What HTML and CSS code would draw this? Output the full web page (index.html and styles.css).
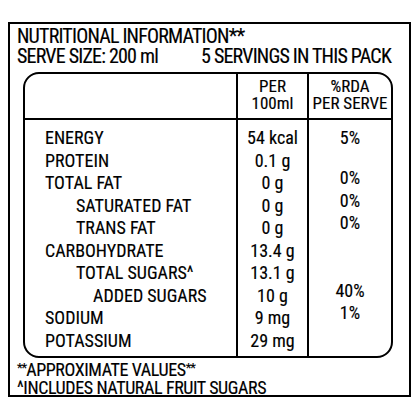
FILE: index.html
```html
<!DOCTYPE html>
<html lang="en">
<head>
    <meta charset="UTF-8">
    <title>Nutritional Information</title>
    <link rel="stylesheet" href="styles.css">
</head>
<body>
<div class="label">
    <div class="title">NUTRITIONAL INFORMATION**</div>
    <div class="serve">
        <span>SERVE SIZE: 200 ml</span>
        <span>5 SERVINGS IN THIS PACK</span>
    </div>

    <div class="facts">
        <table>
            <colgroup>
                <col class="c-name">
                <col class="c-val">
                <col>
            </colgroup>
            <tr class="th">
                <td></td>
                <td class="val">PER<br>100ml</td>
                <td class="rda">%RDA<br>PER SERVE</td>
            </tr>
            <tr class="first">
                <td class="name">ENERGY</td>
                <td class="val">54 kcal</td>
                <td class="rda">5%</td>
            </tr>
            <tr>
                <td class="name">PROTEIN</td>
                <td class="val">0.1 g</td>
                <td class="rda"></td>
            </tr>
            <tr>
                <td class="name">TOTAL FAT</td>
                <td class="val">0 g</td>
                <td class="rda"><span class="lift">0%</span></td>
            </tr>
            <tr>
                <td class="name sub">SATURATED FAT</td>
                <td class="val">0 g</td>
                <td class="rda"><span class="lift">0%</span></td>
            </tr>
            <tr>
                <td class="name sub">TRANS FAT</td>
                <td class="val">0 g</td>
                <td class="rda"><span class="lift">0%</span></td>
            </tr>
            <tr>
                <td class="name">CARBOHYDRATE</td>
                <td class="val">13.4 g</td>
                <td class="rda"></td>
            </tr>
            <tr>
                <td class="name sub">TOTAL SUGARS^</td>
                <td class="val">13.1 g</td>
                <td class="rda"></td>
            </tr>
            <tr>
                <td class="name subsub">ADDED SUGARS</td>
                <td class="val">10 g</td>
                <td class="rda"><span class="lift">40%</span></td>
            </tr>
            <tr>
                <td class="name">SODIUM</td>
                <td class="val">9 mg</td>
                <td class="rda"><span class="lift">1%</span></td>
            </tr>
            <tr class="last">
                <td class="name">POTASSIUM</td>
                <td class="val">29 mg</td>
                <td class="rda"></td>
            </tr>
        </table>
    </div>

    <div class="notes">
        <div><span class="ast">**</span>APPROXIMATE VALUES<span class="ast">**</span></div>
        <div>^INCLUDES NATURAL FRUIT SUGARS</div>
    </div>
</div>
</body>
</html>
```

FILE: styles.css
```css
body {
    margin: 0;
    background-color: #fff;
    color: #000;
    font-family: "Roboto Condensed", Roboto, sans-serif;
    -webkit-text-stroke: 0.15px #000;
}
.label {
    margin: 22px 0 0 8px;
    width: 399px;
    height: 369px;
    border: 2px solid #000;
    padding: 2px 0 0 0;
    box-sizing: content-box;
    overflow: hidden;
}
.title, .serve {
    font-size: 20px;
    line-height: 20px;
    letter-spacing: -0.8px;
    padding: 0 18px 0 7px;
}
.serve {
    display: flex;
    justify-content: space-between;
}
.facts {
    margin: 6px 16px 0 13px;
    border: 2px solid #000;
    border-radius: 16px;
    overflow: hidden;
}
table {
    width: 100%;
    border-collapse: collapse;
    table-layout: fixed;
    font-size: 18px;
}
.c-name {
    width: 212px;
}
.c-val {
    width: 71px;
}
td {
    padding: 0;
    line-height: 22.5px;
    white-space: nowrap;
}
.th td {
    height: 41px;
    padding-bottom: 3px;
    font-size: 17px;
    line-height: 17px;
    border-bottom: 2px solid #000;
}
.first td {
    padding-top: 7px;
}
.last td {
    padding-bottom: 4px;
}
.val, .rda {
    text-align: center;
    border-left: 2px solid #000;
}
.name {
    padding-left: 20px;
}
.name.sub {
    padding-left: 51px;
}
.name.subsub {
    padding-left: 68px;
}
.lift {
    display: inline-block;
    margin-top: -5px;
    vertical-align: top;
}
.notes {
    margin-top: 1px;
    padding-left: 7px;
    font-size: 18px;
    line-height: 17.5px;
    letter-spacing: -0.4px;
}
.ast {
    font-size: 13px;
    letter-spacing: -1px;
    vertical-align: 4px;
}
```
